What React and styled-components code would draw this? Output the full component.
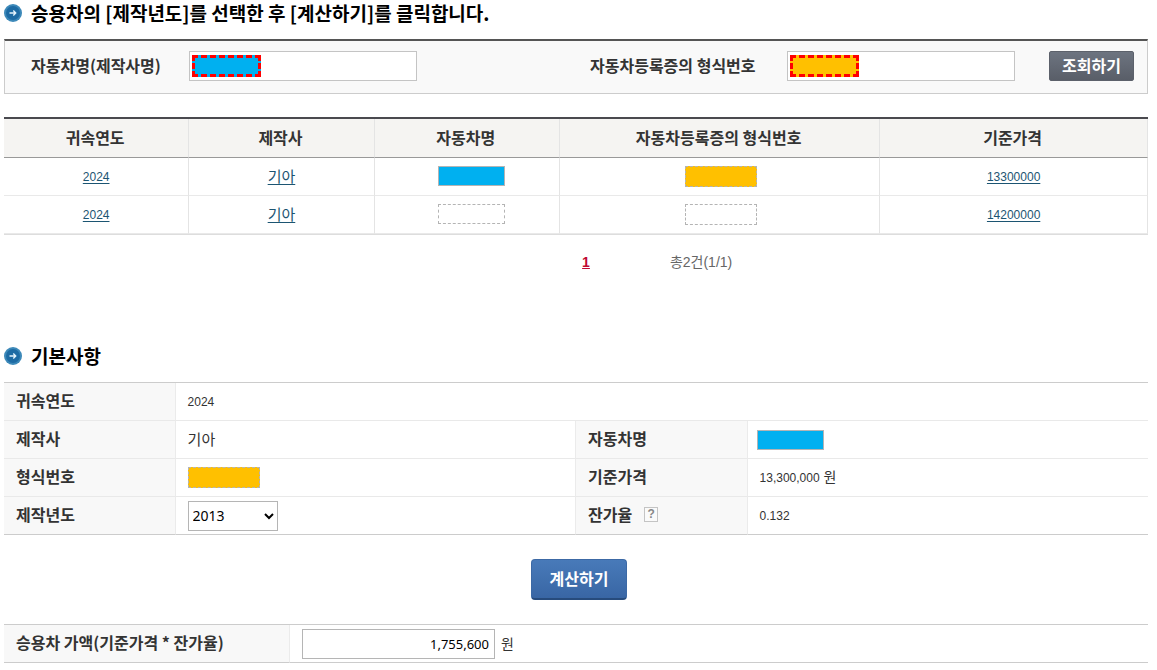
import React, { useState } from "react";
import styled, { createGlobalStyle, css } from "styled-components";

const GlobalStyle = createGlobalStyle`
  *, *::before, *::after { box-sizing: border-box; }
  body {
    margin: 0;
    background: #fff;
    color: #333;
    font-family: "Liberation Sans", "Noto Sans CJK KR", sans-serif;
    font-size: 14px;
    line-height: 20px;
  }
  button, input, select { font: inherit; margin: 0; }
`;

const labelText = css`
  font-family: "Noto Sans CJK KR", sans-serif;
  font-size: 16px;
  font-weight: 700;
  color: #333;
`;

const Page = styled.main`
  padding: 0 9px 7px 4px;
`;

const Heading = styled.h2`
  display: flex;
  align-items: center;
  gap: 9px;
  height: 26px;
  margin: 0 0 13px;
  font-family: "Noto Sans CJK KR", sans-serif;
  font-size: 19px;
  font-weight: 700;
  line-height: 26px;
  color: #000;
  white-space: nowrap;
`;

const SearchPanel = styled.form`
  display: flex;
  align-items: center;
  margin-bottom: 23px;
  padding: 10px 13px 12px 26px;
  border: 1px solid #ccc;
  border-top: 2px solid #555;
  background: #f9f9f9;
`;

const Field = styled.div`
  display: flex;
  align-items: center;
  margin-left: ${(p) => (p.$end ? "auto" : "0")};
`;

const FieldLabel = styled.label`
  ${labelText}
  width: ${(p) => p.$width}px;
  padding-bottom: 2px;
  white-space: nowrap;
`;

const InputWrap = styled.div`
  position: relative;
  width: 228px;
`;

const TextInput = styled.input`
  display: block;
  width: 100%;
  height: 30px;
  padding: 0 6px;
  border: 1px solid #c4c4c4;
  background: #fff;
`;

const MarkedChip = styled.span`
  position: absolute;
  top: 4px;
  left: 3px;
  width: 69px;
  height: 22px;
  border: 3px dashed #f00;
  background: ${(p) => p.$color};
  pointer-events: none;
`;

const SearchButton = styled.button`
  width: 85px;
  height: 30px;
  margin-left: 34px;
  padding: 0 0 2px;
  border: 1px solid #5c616b;
  border-radius: 2px;
  background: linear-gradient(#6d7480, #595e68);
  color: #fff;
  font-family: "Noto Sans CJK KR", sans-serif;
  font-size: 16px;
  font-weight: 700;
  line-height: 20px;
`;

const ResultTable = styled.table`
  width: 100%;
  table-layout: fixed;
  border-collapse: separate;
  border-spacing: 0;
  border-top: 2px solid #4a4a4f;
  border-bottom: 1px solid #ddd;
  text-align: center;
`;

const ResultHead = styled.th`
  ${labelText}
  width: ${(p) => p.$width};
  height: 39px;
  padding: 0 2px 2px 0;
  border-right: 1px solid #e4e4e4;
  border-bottom: 1px solid #999;
  background: #f5f4f2;
`;

const ResultCell = styled.td`
  height: 38px;
  padding: 0;
  border-right: 1px solid #e4e4e4;
  border-bottom: 1px solid #e9e9e9;
  vertical-align: middle;
`;

const ResultChipCell = styled(ResultCell)`
  padding: 8px 0 0 ${(p) => (p.$indent ? 10 : 2)}px;
  vertical-align: top;
`;

const CellLink = styled.a`
  color: #1c5572;
  font-size: ${(p) => (p.$numeric ? 12 : 15)}px;
  text-decoration: underline;
  text-underline-offset: 2px;
`;

const Chip = styled.span`
  display: block;
  width: ${(p) => (p.$wide ? 72 : 67)}px;
  height: ${(p) => (p.$wide ? 21 : 20)}px;
  margin: ${(p) => (p.$centered ? "0 auto" : "0")};
  border: 1px ${(p) => (p.$dashed ? "dashed" : "solid")} #b4b4b4;
  background: ${(p) => p.$color};
`;

const Pager = styled.nav`
  display: grid;
  grid-template-columns: 1fr auto 1fr;
  align-items: center;
  height: 54px;
  margin-bottom: 54px;
  padding-left: 20px;
`;

const PageLink = styled.a`
  grid-column: 2;
  color: #c00a32;
  font-weight: 700;
`;

const PageCount = styled.span`
  padding-left: 80px;
  color: #666;
`;

const InfoTable = styled.table`
  width: 100%;
  table-layout: fixed;
  border-collapse: separate;
  border-spacing: 0;
  border-top: 1px solid #ccc;
`;

const InfoHead = styled.th`
  ${labelText}
  width: ${(p) => p.$width};
  height: 38px;
  padding: 0 0 3px 12px;
  border-right: 1px solid #ebebeb;
  border-bottom: 1px solid ${(p) => (p.$last ? "#ccc" : "#e9e9e9")};
  background: #f8f8f8;
  text-align: left;
  white-space: nowrap;
`;

const InfoCell = styled.td`
  height: 38px;
  padding: 0 0 0 12px;
  border-right: ${(p) => (p.$divided ? "1px solid #ebebeb" : "0")};
  border-bottom: 1px solid ${(p) => (p.$last ? "#ccc" : "#e9e9e9")};
`;

const ChipCell = styled(InfoCell)`
  padding-left: 9px;
`;

const Value = styled.span`
  font-size: ${(p) => (p.$numeric ? 12 : 15)}px;
`;

const YearSelect = styled.select`
  display: block;
  width: 90px;
  height: 30px;
  padding: 0;
  border: 1px solid #b5b5b5;
  background: #fff;
  color: #000;
  font-family: "Noto Sans", sans-serif;
  font-size: 14px;
`;

const HeadRow = styled.div`
  display: flex;
  align-items: center;
  gap: 12px;
`;

const HelpButton = styled.button`
  width: 14px;
  height: 15px;
  padding: 0;
  border: 1px solid #c4c4c4;
  background: #fafafa;
  color: #888;
  font-family: "Liberation Sans", sans-serif;
  font-size: 12px;
  font-weight: 700;
  line-height: 12px;
`;

const Actions = styled.div`
  display: flex;
  justify-content: center;
  padding: 24px 0;
`;

const CalcButton = styled.button`
  width: 96px;
  height: 41px;
  margin-left: 6px;
  padding: 0 0 2px;
  border: 1px solid #3c69a5;
  border-bottom: 2px solid #274b7c;
  border-radius: 4px;
  background: linear-gradient(#487ab9, #3966a4);
  color: #fff;
  font-family: "Noto Sans CJK KR", sans-serif;
  font-size: 16px;
  font-weight: 700;
  line-height: 20px;
`;

const AmountRow = styled.div`
  display: flex;
  align-items: center;
  gap: 6px;
`;

const AmountInput = styled.input`
  width: 193px;
  height: 30px;
  padding: 0 5px;
  border: 1px solid #b5b5b5;
  background: #fff;
  color: #000;
  font-family: "Noto Sans", sans-serif;
  font-size: 13px;
  text-align: right;
`;

const BLUE = "#00b0f0";
const AMBER = "#ffc000";

function ArrowBullet() {
  return (
    <svg width="18" height="18" viewBox="0 0 18 18" aria-hidden="true">
      <circle cx="9" cy="9" r="9" fill="#3d89b9" />
      <circle cx="9" cy="9" r="7" fill="#1d6ba4" />
      <path d="M5.5 9h6M9.3 6.6 11.7 9 9.3 11.4" fill="none" stroke="#e4f4fc" strokeWidth="1.4" />
    </svg>
  );
}

const cars = [
  { year: "2024", maker: "기아", price: "13300000", name: BLUE, model: AMBER },
  { year: "2024", maker: "기아", price: "14200000", name: "#fff", model: "#fff" },
];

export default function App() {
  const [year, setYear] = useState("2013");

  return (
    <Page>
      <GlobalStyle />

      <Heading>
        <ArrowBullet />
        승용차의 [제작년도]를 선택한 후 [계산하기]를 클릭합니다.
      </Heading>

      <SearchPanel onSubmit={(e) => e.preventDefault()}>
        <Field>
          <FieldLabel htmlFor="car-name" $width={158}>자동차명(제작사명)</FieldLabel>
          <InputWrap>
            <TextInput id="car-name" type="text" />
            <MarkedChip $color={BLUE} />
          </InputWrap>
        </Field>
        <Field $end>
          <FieldLabel htmlFor="model-no" $width={197}>자동차등록증의 형식번호</FieldLabel>
          <InputWrap>
            <TextInput id="model-no" type="text" />
            <MarkedChip $color={AMBER} />
          </InputWrap>
        </Field>
        <SearchButton type="submit">조회하기</SearchButton>
      </SearchPanel>

      <ResultTable>
        <thead>
          <tr>
            <ResultHead scope="col" $width="16.2%">귀속연도</ResultHead>
            <ResultHead scope="col" $width="16.2%">제작사</ResultHead>
            <ResultHead scope="col" $width="16.2%">자동차명</ResultHead>
            <ResultHead scope="col" $width="28%">자동차등록증의 형식번호</ResultHead>
            <ResultHead scope="col">기준가격</ResultHead>
          </tr>
        </thead>
        <tbody>
          {cars.map((car) => (
            <tr key={car.price}>
              <ResultCell><CellLink href="#info" $numeric>{car.year}</CellLink></ResultCell>
              <ResultCell><CellLink href="#info">{car.maker}</CellLink></ResultCell>
              <ResultChipCell $indent>
                <Chip $centered $color={car.name} $dashed={car.name === "#fff"} />
              </ResultChipCell>
              <ResultChipCell>
                <Chip $centered $wide $dashed $color={car.model} />
              </ResultChipCell>
              <ResultCell><CellLink href="#info" $numeric>{car.price}</CellLink></ResultCell>
            </tr>
          ))}
        </tbody>
      </ResultTable>

      <Pager>
        <PageLink href="#page-1">1</PageLink>
        <PageCount>총2건(1/1)</PageCount>
      </Pager>

      <Heading id="info">
        <ArrowBullet />
        기본사항
      </Heading>

      <InfoTable>
        <colgroup>
          <col style={{ width: "15%" }} />
          <col style={{ width: "35%" }} />
          <col style={{ width: "15%" }} />
          <col style={{ width: "35%" }} />
        </colgroup>
        <tbody>
          <tr>
            <InfoHead scope="row">귀속연도</InfoHead>
            <InfoCell colSpan={3}><Value $numeric>2024</Value></InfoCell>
          </tr>
          <tr>
            <InfoHead scope="row">제작사</InfoHead>
            <InfoCell $divided><Value>기아</Value></InfoCell>
            <InfoHead scope="row">자동차명</InfoHead>
            <ChipCell><Chip $color={BLUE} /></ChipCell>
          </tr>
          <tr>
            <InfoHead scope="row">형식번호</InfoHead>
            <InfoCell $divided><Chip $wide $dashed $color={AMBER} /></InfoCell>
            <InfoHead scope="row">기준가격</InfoHead>
            <InfoCell><Value $numeric>13,300,000</Value> 원</InfoCell>
          </tr>
          <tr>
            <InfoHead scope="row" $last><label htmlFor="made-year">제작년도</label></InfoHead>
            <InfoCell $divided $last>
              <YearSelect id="made-year" value={year} onChange={(e) => setYear(e.target.value)}>
                <option>2013</option>
                <option>2014</option>
                <option>2015</option>
              </YearSelect>
            </InfoCell>
            <InfoHead scope="row" $last>
              <HeadRow>
                잔가율
                <HelpButton type="button">?</HelpButton>
              </HeadRow>
            </InfoHead>
            <InfoCell $last><Value $numeric>0.132</Value></InfoCell>
          </tr>
        </tbody>
      </InfoTable>

      <Actions>
        <CalcButton type="button">계산하기</CalcButton>
      </Actions>

      <InfoTable>
        <tbody>
          <tr>
            <InfoHead scope="row" $last $width="25%">
              <label htmlFor="amount">승용차 가액(기준가격 * 잔가율)</label>
            </InfoHead>
            <InfoCell $last>
              <AmountRow>
                <AmountInput id="amount" type="text" defaultValue="1,755,600" />
                원
              </AmountRow>
            </InfoCell>
          </tr>
        </tbody>
      </InfoTable>
    </Page>
  );
}
